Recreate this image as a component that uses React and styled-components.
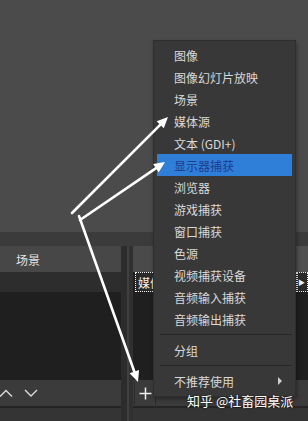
import React from "react";
import styled, { createGlobalStyle } from "styled-components";

const GlobalStyle = createGlobalStyle`
  body {
    margin: 0;
    background: #4b4b4b;
  }
`;

const Page = styled.div`
  position: relative;
  width: 308px;
  height: 421px;
  display: flex;
  flex-direction: column;
  overflow: hidden;
  background: #4b4b4b;
  font-family: "Noto Sans CJK SC", "Noto Sans", sans-serif;
`;

const Preview = styled.div`
  height: 232px;
  background: #4b4b4b;
`;

const Band = styled.div`
  height: 14px;
  background: #3b3b3b;
`;

const Docks = styled.div`
  flex: 1;
  display: flex;
  min-height: 0;
`;

const Dock = styled.div`
  width: ${(p) => p.$w}px;
  flex-shrink: 0;
  display: flex;
  flex-direction: column;
  overflow: hidden;
`;

const DockTitle = styled.div`
  height: 26px;
  flex-shrink: 0;
  display: flex;
  align-items: center;
  padding-left: ${(p) => p.$pl ?? 16}px;
  background: ${(p) => p.$bg || "#474747"};
  color: #e2e2e2;
  font-size: 12px;
`;

const Splitter = styled.div`
  width: 12px;
  flex-shrink: 0;
  background: linear-gradient(
    to right,
    #2c2c2c 0 6px,
    #404040 6px 8px,
    #303030 8px
  );
`;

const List = styled.div`
  flex: 1;
  display: flex;
  flex-direction: column;
  background: #1f1f1f;
`;

const SceneRow = styled.div`
  height: 20px;
  background: #2d2d2d;
`;

const FocusItem = styled.div`
  height: 18px;
  margin-left: ${(p) => (p.$tight ? 0 : 2)}px;
  display: flex;
  align-items: center;
  padding-left: ${(p) => (p.$tight ? 0 : 2)}px;
  border: 1px dotted #f0f0f0;
  background: #2a2a2a;
  color: #f2f2f2;
  font-size: 12px;
  white-space: nowrap;
`;

const Expander = styled.span`
  font-size: 7px;
  line-height: 1;
  color: #f2f2f2;
`;

const Toolbar = styled.div`
  height: 26px;
  flex-shrink: 0;
  display: flex;
  align-items: center;
  gap: ${(p) => p.$gap || 0}px;
  background: #3b3b3b;
`;

const Footer = styled.div`
  height: 13px;
  flex-shrink: 0;
  background: #343434;
  border-top: 2px solid #242424;
`;

const ToolButton = styled.div`
  width: 14px;
  height: 22px;
  display: flex;
  align-items: center;
  justify-content: center;
  margin-left: ${(p) => p.$ml || 0}px;
`;

const PlusButton = styled.div`
  width: 20px;
  height: 24px;
  display: flex;
  align-items: center;
  justify-content: center;
  border-left: 1px solid #2c2c2c;
  border-right: 1px solid #2c2c2c;
  margin-left: 1px;
`;

const Menu = styled.div`
  position: absolute;
  left: 153px;
  top: 40px;
  width: 143px;
  box-sizing: border-box;
  padding: 3px 3px 4px;
  background: #383838;
  border: 1px solid #2e2e2e;
  box-shadow: 1px 2px 4px rgba(0, 0, 0, 0.35);
  display: flex;
  flex-direction: column;
`;

const MenuItem = styled.div`
  height: 22px;
  display: flex;
  align-items: center;
  padding-left: 17px;
  font-size: 12px;
  color: ${(p) => (p.$active ? "#1d3c8e" : "#d8d8d8")};
  background: ${(p) => (p.$active ? "#2f7fd8" : "transparent")};
  white-space: nowrap;
`;

const Separator = styled.div`
  height: 9px;
  display: flex;
  align-items: center;

  &::after {
    content: "";
    flex: 1;
    height: 1px;
    margin-left: 3px;
    background: #262626;
  }
`;

const SubArrow = styled.span`
  margin-left: auto;
  margin-right: 10px;
  width: 0;
  height: 0;
  border-left: 4px solid #cfcfcf;
  border-top: 4px solid transparent;
  border-bottom: 4px solid transparent;
`;

const Watermark = styled.div`
  position: absolute;
  left: 187px;
  top: 391px;
  font-size: 13px;
  color: #ffffff;
  white-space: nowrap;
  text-shadow: 0 0 2px rgba(0, 0, 0, 0.8);
`;

const Overlay = styled.svg`
  position: absolute;
  left: 0;
  top: 0;
  pointer-events: none;
`;

const items = [
  "图像",
  "图像幻灯片放映",
  "场景",
  "媒体源",
  "文本 (GDI+)",
  "显示器捕获",
  "浏览器",
  "游戏捕获",
  "窗口捕获",
  "色源",
  "视频捕获设备",
  "音频输入捕获",
  "音频输出捕获",
];

const arrows = [
  { from: [72, 213], to: [168, 117] },
  { from: [80, 220], to: [165, 162] },
  { from: [79, 216], to: [138, 382] },
];

const Arrow = ({ from, to }) => {
  const dx = to[0] - from[0];
  const dy = to[1] - from[1];
  const len = Math.hypot(dx, dy);
  const ux = dx / len;
  const uy = dy / len;
  const bx = to[0] - ux * 11;
  const by = to[1] - uy * 11;
  const nx = -uy * 5;
  const ny = ux * 5;
  const head = `${to[0]},${to[1]} ${bx + nx},${by + ny} ${bx - nx},${by - ny}`;
  return (
    <g>
      <line
        x1={from[0]}
        y1={from[1]}
        x2={bx + ux * 2}
        y2={by + uy * 2}
        stroke="#ffffff"
        strokeWidth="2.6"
        strokeLinecap="round"
      />
      <polygon points={head} fill="#ffffff" />
    </g>
  );
};

const Chevron = ({ up }) => (
  <svg width="14" height="8" viewBox="0 0 14 8">
    <path
      d={up ? "M1 7.5 L7 1.5 L13 7.5" : "M1 1 L7 7 L13 1"}
      fill="none"
      stroke="#dcdcdc"
      strokeWidth="1.4"
    />
  </svg>
);

const Plus = () => (
  <svg width="13" height="13" viewBox="0 0 13 13">
    <path d="M6.5 0.5 V12.5 M0.5 6.5 H12.5" stroke="#f0f0f0" strokeWidth="1.5" />
  </svg>
);

export default function App() {
  return (
    <Page>
      <GlobalStyle />
      <Preview />
      <Band />
      <Docks>
        <Dock $w={121}>
          <DockTitle>场景</DockTitle>
          <List>
            <SceneRow />
          </List>
          <Toolbar $gap={11}>
            <ToolButton $ml={-1}>
              <Chevron up />
            </ToolButton>
            <ToolButton>
              <Chevron />
            </ToolButton>
          </Toolbar>
          <Footer />
        </Dock>
        <Splitter />
        <Dock $w={164}>
          <DockTitle $bg="#4a4a4a" $pl={66}>来源</DockTitle>
          <List>
            <FocusItem>媒体源</FocusItem>
          </List>
          <Toolbar>
            <PlusButton>
              <Plus />
            </PlusButton>
          </Toolbar>
          <Footer />
        </Dock>
        <Dock $w={11}>
          <DockTitle $bg="#505050" />
          <List>
            <FocusItem $tight>
              <Expander>▶</Expander>
            </FocusItem>
          </List>
          <Toolbar />
          <Footer />
        </Dock>
      </Docks>

      <Menu>
        {items.map((label) => (
          <MenuItem key={label} $active={label === "显示器捕获"}>
            {label}
          </MenuItem>
        ))}
        <Separator />
        <MenuItem>分组</MenuItem>
        <Separator />
        <MenuItem>
          不推荐使用
          <SubArrow />
        </MenuItem>
      </Menu>

      <Watermark>知乎 @社畜园桌派</Watermark>

      <Overlay width="308" height="421" viewBox="0 0 308 421">
        {arrows.map((a, i) => (
          <Arrow key={i} from={a.from} to={a.to} />
        ))}
      </Overlay>
    </Page>
  );
}
